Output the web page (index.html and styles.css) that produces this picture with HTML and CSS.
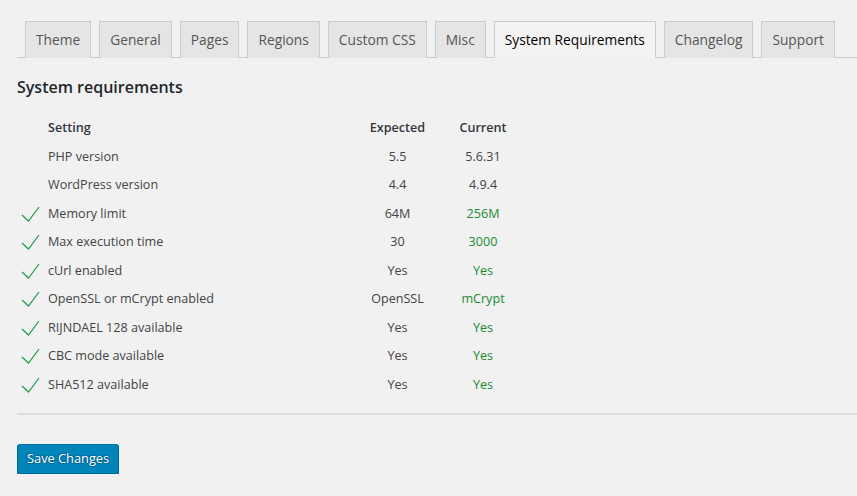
FILE: index.html
```html
<!DOCTYPE html>
<html>
<head>
<meta charset="utf-8">
<link rel="stylesheet" href="styles.css">
</head>
<body>
<div class="wrap">
  <nav class="tabs">
    <a class="tab">Theme</a>
    <a class="tab">General</a>
    <a class="tab">Pages</a>
    <a class="tab">Regions</a>
    <a class="tab">Custom CSS</a>
    <a class="tab">Misc</a>
    <a class="tab active">System Requirements</a>
    <a class="tab">Changelog</a>
    <a class="tab">Support</a>
  </nav>
  <h2 class="title">System requirements</h2>
  <table class="req">
    <colgroup><col class="c-icon"><col class="c-set"><col class="c-exp"><col class="c-cur"></colgroup>
    <thead>
      <tr><th></th><th class="left">Setting</th><th>Expected</th><th>Current</th></tr>
    </thead>
    <tbody>
      <tr><td></td><td class="left">PHP version</td><td>5.5</td><td>5.6.31</td></tr>
      <tr><td></td><td class="left">WordPress version</td><td>4.4</td><td>4.9.4</td></tr>
      <tr><td class="icon"><svg width="20" height="16" viewBox="0 0 20 16"><polyline points="1,9 7.5,15 18,1" fill="none" stroke="#1f9a4e" stroke-width="1.2"/></svg></td><td class="left">Memory limit</td><td>64M</td><td class="ok">256M</td></tr>
      <tr><td class="icon"><svg width="20" height="16" viewBox="0 0 20 16"><polyline points="1,9 7.5,15 18,1" fill="none" stroke="#1f9a4e" stroke-width="1.2"/></svg></td><td class="left">Max execution time</td><td>30</td><td class="ok">3000</td></tr>
      <tr><td class="icon"><svg width="20" height="16" viewBox="0 0 20 16"><polyline points="1,9 7.5,15 18,1" fill="none" stroke="#1f9a4e" stroke-width="1.2"/></svg></td><td class="left">cUrl enabled</td><td>Yes</td><td class="ok">Yes</td></tr>
      <tr><td class="icon"><svg width="20" height="16" viewBox="0 0 20 16"><polyline points="1,9 7.5,15 18,1" fill="none" stroke="#1f9a4e" stroke-width="1.2"/></svg></td><td class="left">OpenSSL or mCrypt enabled</td><td>OpenSSL</td><td class="ok">mCrypt</td></tr>
      <tr><td class="icon"><svg width="20" height="16" viewBox="0 0 20 16"><polyline points="1,9 7.5,15 18,1" fill="none" stroke="#1f9a4e" stroke-width="1.2"/></svg></td><td class="left">RIJNDAEL 128 available</td><td>Yes</td><td class="ok">Yes</td></tr>
      <tr><td class="icon"><svg width="20" height="16" viewBox="0 0 20 16"><polyline points="1,9 7.5,15 18,1" fill="none" stroke="#1f9a4e" stroke-width="1.2"/></svg></td><td class="left">CBC mode available</td><td>Yes</td><td class="ok">Yes</td></tr>
      <tr><td class="icon"><svg width="20" height="16" viewBox="0 0 20 16"><polyline points="1,9 7.5,15 18,1" fill="none" stroke="#1f9a4e" stroke-width="1.2"/></svg></td><td class="left">SHA512 available</td><td>Yes</td><td class="ok">Yes</td></tr>
    </tbody>
  </table>
  <hr class="sep">
  <button class="primary">Save Changes</button>
</div>
</body>
</html>
```
FILE: styles.css
```css
html, body {
  margin: 0;
  background: #f1f1f1;
}
body {
  font-family: "Open Sans", "Liberation Sans", sans-serif;
  color: #444;
  font-size: 12.6px;
}
.wrap {
  padding: 21px 0 0 17px;
}
.tabs {
  display: flex;
  gap: 8px;
  padding-left: 8px;
  border-bottom: 1px solid #ccc;
  height: 36px;
}
.tab {
  display: block;
  box-sizing: border-box;
  height: 37px;
  border: 1px solid #ccc;
  border-bottom: none;
  background: #e5e5e5;
  color: #555;
  font-size: 13.75px;
  line-height: 24px;
  padding: 6px 10px 4px;
  white-space: nowrap;
}
.tab.active {
  background: #f3f3f3;
  color: #000;
  border-bottom: 1px solid #f3f3f3;
}
.title {
  font-size: 16px;
  font-weight: 600;
  color: #23282d;
  margin: 18px 0 0 0;
  line-height: 22px;
}
.req {
  border-collapse: collapse;
  table-layout: fixed;
  margin-top: 16px;
}
.c-icon { width: 31px; }
.c-set { width: 307px; }
.c-exp { width: 85px; }
.c-cur { width: 86px; }
.req th, .req td {
  padding: 4px 0;
  line-height: 20.5px;
  text-align: center;
  font-weight: normal;
}
.req th {
  font-weight: 600;
  color: #32373c;
}
.req .left {
  text-align: left;
}
.req .icon {
  text-align: left;
  padding-left: 4px;
}
.req .icon svg {
  display: block;
}
.req .ok {
  color: #1a8a34;
}
.sep {
  border: none;
  border-top: 2px solid #dedede;
  margin: 14px 0 0 0;
  height: 0;
}
.primary {
  margin-top: 29px;
  display: block;
  height: 30px;
  box-sizing: border-box;
  padding: 0 9px 2px;
  line-height: 26px;
  font-family: inherit;
  font-size: 12.8px;
  color: #fff;
  background: #0085ba;
  border: 1px solid;
  border-color: #0073aa #006799 #006799;
  border-radius: 3px;
  box-shadow: 0 1px 0 #006799;
  text-shadow: 0 -1px 1px #006799, 1px 0 1px #006799, 0 1px 1px #006799, -1px 0 1px #006799;
}
```
